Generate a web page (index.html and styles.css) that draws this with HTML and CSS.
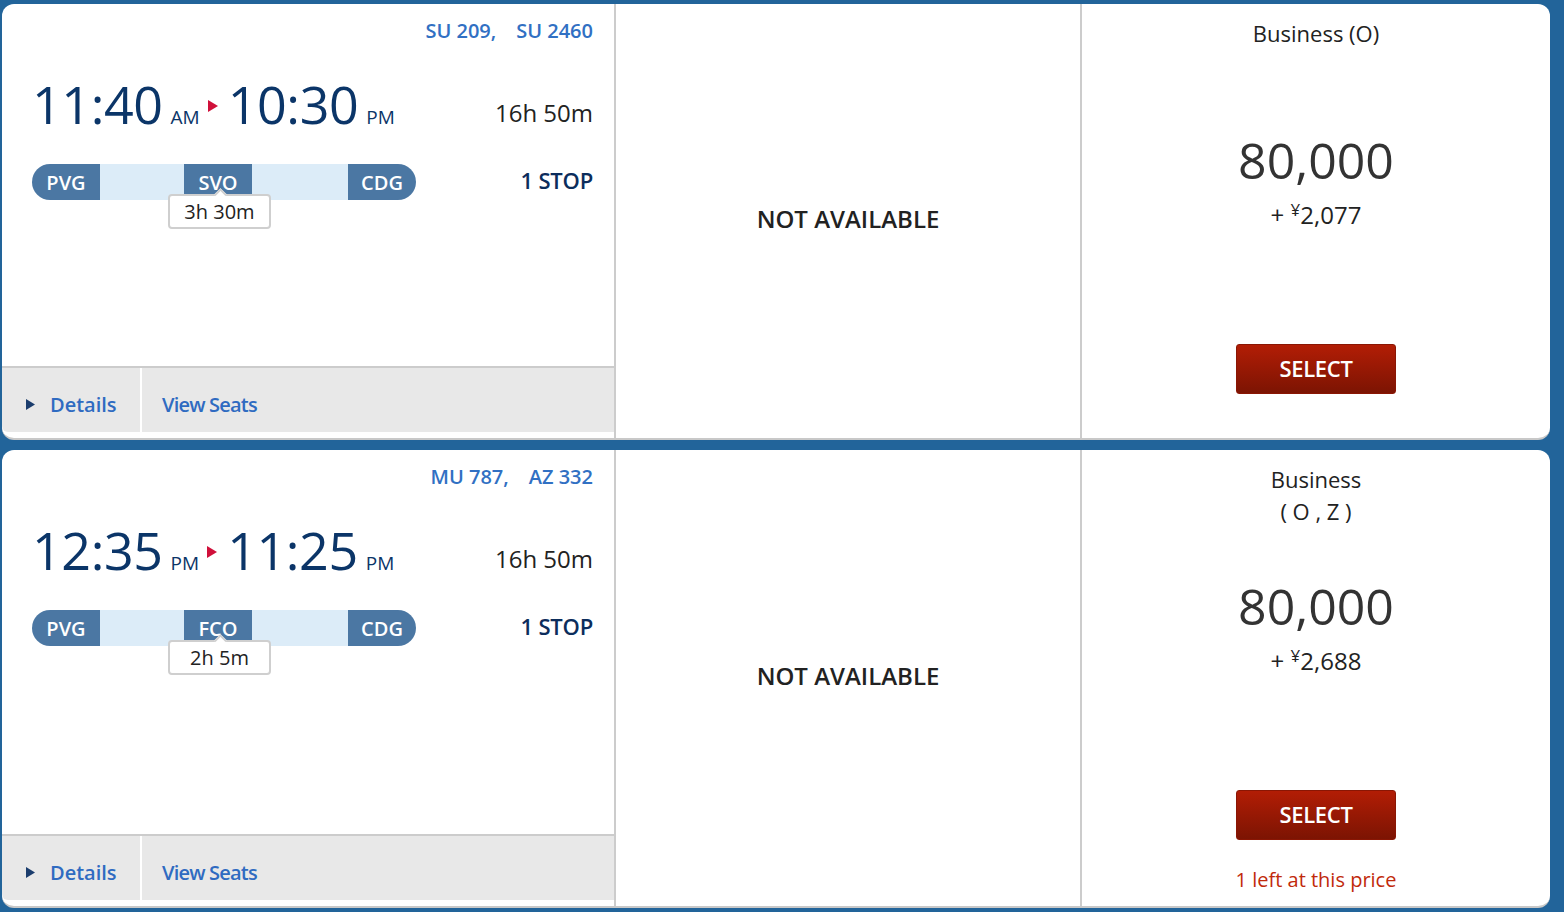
FILE: index.html
```html
<!DOCTYPE html>
<html lang="en">
<head>
<meta charset="utf-8">
<title>Flight results</title>
<link rel="stylesheet" href="styles.css">
</head>
<body>
<div class="list">

  <div class="card">
    <div class="info">
      <div class="info-top">
        <div class="flights"><span>SU 209,</span><span class="fn2">SU 2460</span></div>
        <div class="times-row">
          <div class="times">
            <span class="t">11:40</span><span class="ap">AM</span><svg class="arrow" width="10" height="12" viewBox="0 0 10 12"><polygon points="0,0 10,6 0,12" fill="#d0103a"/></svg><span class="t t2">10:30</span><span class="ap">PM</span>
          </div>
          <div class="dur">16h 50m</div>
        </div>
        <div class="route-row">
          <div class="route">
            <span class="ap-code first">PVG</span><span class="leg l1"></span><span class="ap-code">SVO</span><span class="leg l2"></span><span class="ap-code last">CDG</span>
            <div class="layover">3h 30m<i class="notch"></i></div>
          </div>
          <div class="stops">1 STOP</div>
        </div>
      </div>
      <div class="info-foot">
        <div class="foot-item details"><svg class="tri" width="9" height="11" viewBox="0 0 9 11"><polygon points="0,0 9,5.5 0,11" fill="#1b3d6d"/></svg><span>Details</span></div>
        <div class="foot-item seats"><span>View Seats</span></div>
      </div>
    </div>
    <div class="mid"><span>NOT AVAILABLE</span></div>
    <div class="fare">
      <div class="cls">Business (O)</div>
      <div class="miles">80,000</div>
      <div class="fees">+ <sup>¥</sup>2,077</div>
      <div class="btn">SELECT</div>
    </div>
  </div>

  <div class="card">
    <div class="info">
      <div class="info-top">
        <div class="flights"><span>MU 787,</span><span class="fn2">AZ 332</span></div>
        <div class="times-row">
          <div class="times">
            <span class="t">12:35</span><span class="ap">PM</span><svg class="arrow" width="10" height="12" viewBox="0 0 10 12"><polygon points="0,0 10,6 0,12" fill="#d0103a"/></svg><span class="t t2">11:25</span><span class="ap">PM</span>
          </div>
          <div class="dur">16h 50m</div>
        </div>
        <div class="route-row">
          <div class="route">
            <span class="ap-code first">PVG</span><span class="leg l1"></span><span class="ap-code">FCO</span><span class="leg l2"></span><span class="ap-code last">CDG</span>
            <div class="layover">2h 5m<i class="notch"></i></div>
          </div>
          <div class="stops">1 STOP</div>
        </div>
      </div>
      <div class="info-foot">
        <div class="foot-item details"><svg class="tri" width="9" height="11" viewBox="0 0 9 11"><polygon points="0,0 9,5.5 0,11" fill="#1b3d6d"/></svg><span>Details</span></div>
        <div class="foot-item seats"><span>View Seats</span></div>
      </div>
    </div>
    <div class="mid"><span>NOT AVAILABLE</span></div>
    <div class="fare">
      <div class="cls">Business<br>( O , Z )</div>
      <div class="miles">80,000</div>
      <div class="fees">+ <sup>¥</sup>2,688</div>
      <div class="btn">SELECT</div>
      <div class="note">1 left at this price</div>
    </div>
  </div>

</div>
</body>
</html>
```

FILE: styles.css
```css
* { box-sizing: border-box; }

html, body {
  margin: 0;
  padding: 0;
}

body {
  background: #22649a;
  font-family: "Open Sans", "Liberation Sans", sans-serif;
  color: #222;
  width: 1564px;
  height: 912px;
  overflow: hidden;
}

.list {
  display: flex;
  flex-direction: column;
  gap: 10px;
  padding: 4px 14px 0 2px;
}

.card {
  display: grid;
  grid-template-columns: 612px 466px 470px;
  background: #fff;
  border-radius: 12px;
  border-bottom: 2px solid #c8c8c8;
  overflow: hidden;
}

/* left column */
.info {
  display: flex;
  flex-direction: column;
  padding-bottom: 6px;
}

.info-top {
  flex: 1;
  min-height: 362px;
  padding: 14px 21px 0 30px;
}

.flights {
  text-align: right;
  font-size: 20px;
  line-height: 26px;
  font-weight: 600;
  color: #3170c3;
}

.flights .fn2 { margin-left: 20px; }

.times-row {
  display: flex;
  justify-content: space-between;
  align-items: baseline;
  margin-top: 30px;
}

.times {
  color: #0b3568;
  line-height: 60px;
  white-space: nowrap;
}

.times .t {
  font-size: 52px;
  font-weight: 400;
  letter-spacing: -0.4px;
}

.times .t2 { margin-left: 10px; }

.times .ap {
  font-size: 19px;
  margin-left: 8px;
}

.times .ap:last-child { margin-left: 8px; }

.times .arrow {
  display: inline-block;
  vertical-align: 12px;
  margin-left: 8px;
}

.dur {
  font-size: 24px;
  color: #222;
  position: relative;
  top: -2px;
}

.route-row {
  display: flex;
  justify-content: space-between;
  align-items: flex-start;
  margin-top: 16px;
}

.route {
  position: relative;
  display: flex;
  width: 384px;
  height: 36px;
}

.ap-code {
  width: 68px;
  height: 36px;
  background: #4b77a3;
  color: #fff;
  font-size: 20px;
  font-weight: 600;
  line-height: 38px;
  text-align: center;
}

.ap-code.first { border-radius: 18px 0 0 18px; }
.ap-code.last { border-radius: 0 18px 18px 0; }

.leg { background: #dcecf8; }
.leg.l1 { width: 84px; }
.leg.l2 { width: 96px; }

.layover {
  position: absolute;
  left: 136px;
  top: 30px;
  width: 103px;
  height: 35px;
  background: #fff;
  border: 2px solid #cfcfcf;
  border-radius: 4px;
  font-size: 20px;
  line-height: 32px;
  text-align: center;
  color: #222;
}

.notch {
  position: absolute;
  left: 46px;
  top: -6px;
  width: 9px;
  height: 9px;
  background: #fff;
  border-top: 2px solid #cfcfcf;
  border-left: 2px solid #cfcfcf;
  transform: rotate(45deg);
}

.stops {
  font-size: 22px;
  line-height: 32px;
  font-weight: 600;
  color: #0c2d5c;
  letter-spacing: -0.2px;
}

.info-foot {
  display: flex;
  height: 66px;
  border-top: 2px solid #cccccc;
  background: #e8e8e8;
  border-bottom-left-radius: 6px;
}

.foot-item {
  display: flex;
  align-items: center;
  padding-top: 9px;
  font-size: 20px;
  font-weight: 600;
  color: #2f6bc1;
}

.foot-item.details {
  width: 138px;
  padding-left: 24px;
}

.foot-item .tri { margin-right: 15px; }

.foot-item.seats {
  border-left: 2px solid #fff;
  padding-left: 20px;
  letter-spacing: -0.8px;
}

/* middle column */
.mid {
  border-left: 2px solid #cccccc;
  display: flex;
  align-items: center;
  justify-content: center;
  font-size: 24px;
  font-weight: 600;
  color: #222;
  padding-bottom: 6px;
}

/* right column */
.fare {
  border-left: 2px solid #cccccc;
  display: flex;
  flex-direction: column;
  align-items: center;
  padding: 13px 0 12px;
}

.cls {
  height: 65px;
  font-size: 22px;
  line-height: 32px;
  text-align: center;
  color: #222;
}

.miles {
  margin-top: 48px;
  font-size: 50px;
  line-height: 60px;
  color: #333;
}

.fees {
  margin-top: 10px;
  font-size: 24px;
  line-height: 30px;
  color: #222;
}

.fees sup {
  font-size: 17px;
  line-height: 0;
  vertical-align: 8px;
}

.btn {
  margin-top: 114px;
  width: 160px;
  height: 50px;
  border-radius: 3px;
  background: linear-gradient(#b21d05, #7c1403);
  border: 1px solid #8a1604;
  color: #fff;
  font-size: 22px;
  font-weight: 600;
  line-height: 46px;
  text-align: center;
  letter-spacing: -0.3px;
}

.note {
  margin-top: 26px;
  font-size: 20px;
  line-height: 28px;
  color: #c12a0b;
}
```
